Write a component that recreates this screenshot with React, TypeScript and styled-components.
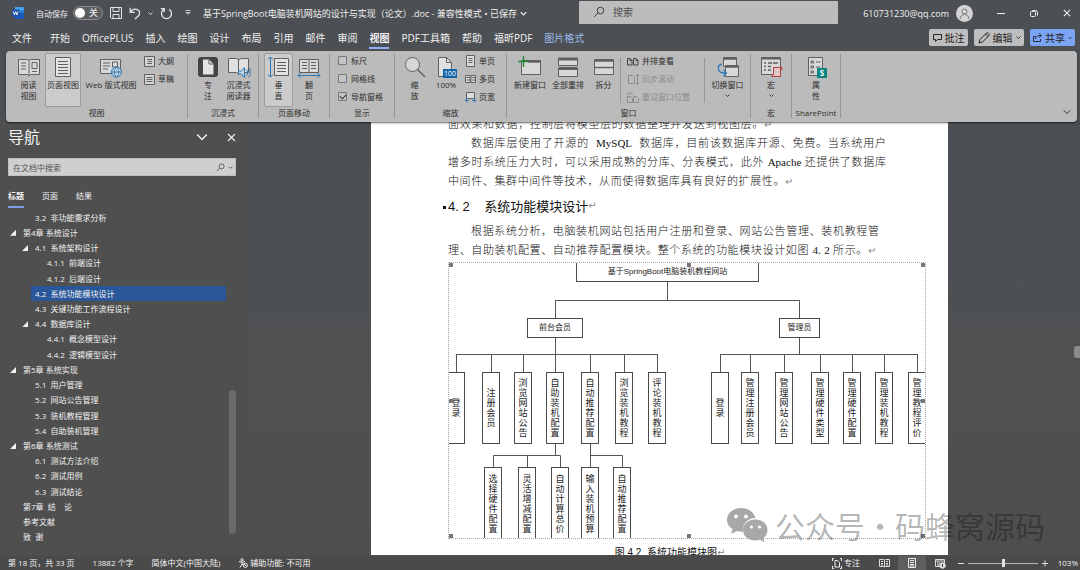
import React from "react";
import styled, { createGlobalStyle } from "styled-components";

const UI = `"Open Sans", "Noto Sans CJK SC", sans-serif`;
const SERIF = `"Liberation Serif", "Noto Sans CJK SC", serif`;
const HEI = `"Liberation Sans", "Noto Sans CJK SC", sans-serif`;

const GlobalStyle = createGlobalStyle`
  * { box-sizing: border-box; }
  body { margin: 0; overflow: hidden; font-family: ${UI}; }
  button, input { font-family: inherit; font-size: inherit; color: inherit; margin: 0; }
  button { background: none; border: 0; padding: 0; }
  svg { display: block; flex: none; }
`;

const Shell = styled.div`
  position: relative;
  display: flex;
  flex-direction: column;
  height: 100vh;
  min-height: 480px;
  background: #4c4f53;
  color: #f2f2f2;
  overflow: hidden;
`;

/* ---------- title bar ---------- */
const TitleBar = styled.header`
  display: flex;
  align-items: center;
  height: 26px;
  flex: none;
  font-size: 9px;
`;
const TitleLeft = styled.div`
  display: flex;
  align-items: center;
  flex: 1;
  min-width: 0;
  height: 24px;
  padding-left: 12px;
  white-space: nowrap;
`;
const AutoSave = styled.label`
  display: flex;
  align-items: center;
  gap: 5px;
  margin-left: 12px;
  font-size: 8px;
`;
const Toggle = styled.button`
  display: flex;
  align-items: center;
  justify-content: space-between;
  width: 30px;
  height: 14px;
  padding: 0 4px 0 1px;
  border: 1px solid #8c8c8c;
  border-radius: 7px;
  background: #5d5d5d;
  font-size: 9px;
  line-height: 12px;
`;
const Knob = styled.span`
  width: 10px;
  height: 10px;
  border-radius: 50%;
  background: #fff;
`;
const QuickTools = styled.div`
  display: flex;
  align-items: center;
  gap: 7px;
  margin-left: 7px;
  width: 93px;
`;
const IconButton = styled.button`
  display: flex;
  align-items: center;
  justify-content: center;
`;
const DocTitle = styled.div`
  display: flex;
  align-items: center;
  gap: 3px;
  overflow: hidden;
`;
const SearchBox = styled.label`
  display: flex;
  align-items: center;
  gap: 8px;
  flex: 0 1 259px;
  height: 23px;
  padding-left: 14px;
  background: #bcbcbc;
  border-radius: 1px;
  color: #444;
  margin-bottom: 2px;
  input {
    border: 0;
    background: none;
    outline: 0;
    padding: 0;
    min-width: 0;
    flex: 1;
    font-size: 10px;
  }
  input::placeholder { color: #4c4c4c; opacity: 1; }
`;
const TitleRight = styled.div`
  display: flex;
  align-items: center;
  justify-content: flex-end;
  width: 242px;
  height: 24px;
  padding-right: 9px;
`;
const Avatar = styled.span`
  display: flex;
  width: 17px;
  height: 17px;
  margin: 0 24px 0 7px;
  border-radius: 50%;
  background: #d4d4d4;
  align-items: center;
  justify-content: center;
`;
const WindowButtons = styled.div`
  display: flex;
  gap: 25px;
`;

/* ---------- tabs ---------- */
const TabBar = styled.nav`
  display: flex;
  align-items: center;
  gap: 12px;
  height: 25px;
  flex: none;
  padding: 0 5px 0 12px;
  font-size: 10px;
`;
const Tab = styled.button<{ $active?: boolean; $accent?: boolean }>`
  height: 22px;
  line-height: 18px;
  margin-bottom: 2px;
  padding-top: 2px;
  white-space: nowrap;
  color: ${(p) => (p.$accent ? "#9db9ee" : "#f2f2f2")};
  font-weight: ${(p) => (p.$active ? 700 : 400)};
  border-bottom: 2px solid ${(p) => (p.$active ? "#8fb0f0" : "transparent")};
  &:first-child { margin-right: 6px; }
`;
const TabActions = styled.div`
  display: flex;
  gap: 6px;
  margin-left: auto;
`;
const ActionButton = styled.button<{ $primary?: boolean; $width: number }>`
  display: flex;
  align-items: center;
  justify-content: center;
  gap: 3px;
  width: ${(p) => p.$width}px;
  height: 17px;
  margin-bottom: 2px;
  border-radius: 2px;
  background: ${(p) => (p.$primary ? "#7ba4f2" : "#bebebe")};
  color: #222;
  white-space: nowrap;
`;

/* ---------- ribbon ---------- */
const Ribbon = styled.section`
  display: flex;
  flex: none;
  height: 71px;
  margin: 0 3px 0 6px;
  padding-top: 3px;
  border-radius: 4px;
  background: #bbbbbb;
  box-shadow: 0 1px 2px rgba(0, 0, 0, 0.6);
  color: #2c2c2c;
  font-size: 8px;
  position: relative;
`;
const Group = styled.div<{ $width: number }>`
  display: flex;
  flex-direction: column;
  width: ${(p) => p.$width}px;
  flex: none;
  height: 64px;
  border-right: 1px solid #979797;
`;
const GroupItems = styled.div<{ $pad?: number }>`
  display: flex;
  height: 53px;
  padding-left: ${(p) => p.$pad ?? 0}px;
`;
const GroupLabel = styled.div`
  line-height: 11px;
  text-align: center;
  white-space: nowrap;
`;
const BigButton = styled.button<{ $width: number; $selected?: boolean }>`
  display: flex;
  flex-direction: column;
  align-items: center;
  flex: none;
  width: ${(p) => p.$width}px;
  height: 54px;
  margin-top: -1px;
  padding-top: 2px;
  border: 1px solid ${(p) => (p.$selected ? "#9c9c9c" : "transparent")};
  border-radius: 2px;
  background: ${(p) => (p.$selected ? "#cbcbcb" : "none")};
  white-space: pre;
  line-height: 11px;
  > svg:first-child { margin-bottom: 1px; }
  > svg + svg { margin-top: 3px; }
`;
const SmallStack = styled.div<{ $gap?: number }>`
  display: flex;
  flex-direction: column;
  padding-left: ${(p) => p.$gap ?? 4}px;
`;
const SmallButton = styled.button<{ $disabled?: boolean }>`
  display: flex;
  align-items: center;
  gap: 3px;
  height: 18px;
  line-height: 14px;
  padding-bottom: 4px;
  white-space: nowrap;
  color: ${(p) => (p.$disabled ? "#8b8b8b" : "#2c2c2c")};
`;
const CheckRow = styled.label`
  display: flex;
  align-items: center;
  gap: 4px;
  height: 18px;
  padding-bottom: 4px;
  white-space: nowrap;
`;
const CheckBox = styled.input`
  appearance: none;
  display: flex;
  align-items: center;
  justify-content: center;
  width: 9px;
  height: 9px;
  border: 1px solid #777;
  border-radius: 1px;
  background: #c4c4c4;
  &:checked::after {
    content: "";
    width: 5px;
    height: 3px;
    border-left: 1px solid #333;
    border-bottom: 1px solid #333;
    transform: rotate(-45deg);
  }
`;
const InnerRule = styled.div<{ $push?: boolean }>`
  width: 1px;
  height: 45px;
  margin: 4px 0 0 ${(p) => (p.$push ? "auto" : "0")};
  background: #979797;
`;
const CollapseButton = styled.button`
  align-self: flex-end;
  margin: 0 6px 6px auto;
`;

/* ---------- body ---------- */
const Body = styled.div`
  display: flex;
  flex: 1;
  min-height: 0;
`;
const NavPane = styled.aside`
  display: flex;
  flex-direction: column;
  width: 246px;
  flex: none;
  padding-left: 8px;
  background: #4f4f4f;
  font-size: 8px;
`;
const NavHead = styled.div`
  display: flex;
  align-items: center;
  gap: 19px;
  height: 32px;
  padding: 0 10px 2px 0;
  h2 { margin: 0 auto 0 0; font-size: 16px; font-weight: 400; line-height: 24px; }
`;
const NavSearch = styled.label`
  display: flex;
  align-items: center;
  gap: 3px;
  height: 18px;
  margin: 4px 10px 0 0;
  padding: 0 2px 0 4px;
  border: 1px solid #bdbdbd;
  background: #cfcfcf;
  color: #555;
  input { flex: 1; min-width: 0; border: 0; padding: 0; background: none; outline: 0; }
  input::placeholder { color: #555; opacity: 1; }
`;
const NavTabs = styled.div`
  display: flex;
  gap: 18px;
  height: 34px;
  padding-top: 11px;
`;
const NavTab = styled.button<{ $active?: boolean }>`
  height: 21px;
  padding-bottom: 3px;
  font-weight: ${(p) => (p.$active ? 700 : 400)};
  border-bottom: 2px solid ${(p) => (p.$active ? "#7d9fe0" : "transparent")};
`;
const TreeArea = styled.div`
  display: flex;
  flex: 1;
  min-height: 0;
  padding: 0 10px 11px 0;
`;
const Tree = styled.ul`
  display: grid;
  grid-auto-rows: 1fr;
  flex: 1;
  margin: 0;
  padding: 0 3px 0 0;
  list-style: none;
`;
const TreeRow = styled.li<{ $level: number }>`
  display: flex;
  align-items: center;
  min-height: 0;
  padding-left: ${(p) => p.$level * 12 + 2}px;
`;
const Arrow = styled.span<{ $open?: boolean }>`
  width: 6px;
  height: 6px;
  margin-right: 3px;
  flex: none;
  background: ${(p) => (p.$open ? "#f2f2f2" : "none")};
  clip-path: polygon(100% 0, 100% 100%, 0 100%);
`;
const TreeLink = styled.a<{ $current?: boolean }>`
  display: flex;
  align-items: center;
  flex: 1;
  height: 100%;
  padding-left: 4px;
  color: inherit;
  text-decoration: none;
  white-space: pre;
  line-height: 12px;
  background: ${(p) => (p.$current ? "#2a579a" : "none")};
`;
const TreeThumb = styled.div`
  width: 7px;
  margin: 180px 0 11px;
  border-radius: 3px;
  background: #6a6a6a;
`;
const Workspace = styled.main`
  display: flex;
  flex: 1;
  min-width: 0;
  background: linear-gradient(#4a4f54, #4c5054 35%, #505050 60%, #4f4e4e);
`;
const ScrollTrack = styled.div`
  width: 7px;
  padding: 224px 0 0 1px;
  flex: none;
`;
const ScrollThumb = styled.div`
  height: 12px;
  border-radius: 3px 0 0 3px;
  background: #8b8b8b;
`;
const Sheet = styled.article`
  width: 577px;
  max-width: 100%;
  margin: 0 auto 1px;
  padding: 0 22px 0 77px;
  overflow: hidden;
  background: #fff;
  color: #111;
  font-family: ${SERIF};
  font-size: 11px;
`;
const Scrolled = styled.div`
  margin-top: -7px;
`;
const Paragraph = styled.p`
  margin: 0 40px 0 0;
  line-height: 19px;
  font-weight: 300;
`;
const Line = styled.span<{ $indent?: boolean; $short?: number }>`
  display: block;
  margin-left: ${(p) => (p.$indent ? 23 : 0)}px;
  margin-right: ${(p) => p.$short ?? 0}px;
  text-align: justify;
  text-align-last: justify;
  white-space: nowrap;
`;
const Mark = styled.span`
  color: #8a8a8a;
  font-family: "DejaVu Sans", sans-serif;
  font-size: 10px;
  line-height: 10px;
`;
const Heading = styled.h3`
  display: flex;
  align-items: center;
  height: 31px;
  margin: 0 0 0 -5px;
  padding-bottom: 2px;
  font: 400 13px ${HEI};
  white-space: pre;
  &::before { content: ""; width: 3px; height: 3px; margin: 3px 2px 0 0; background: #111; }
`;
const Figure = styled.figure`
  margin: 2px 0 0;
`;
const Canvas = styled.div`
  position: relative;
  height: 277px;
  overflow: hidden;
  border: 1px dotted #a8a8a8;
  color: #222;
  font-family: ${HEI};
  font-size: 8px;
  > svg { position: absolute; left: -1px; top: -1px; }
`;
const Node = styled.div<{ $x: number; $y: number; $w: number; $h: number; $vertical?: boolean }>`
  position: absolute;
  left: ${(p) => p.$x - 449}px;
  top: ${(p) => p.$y - 263}px;
  width: ${(p) => p.$w}px;
  height: ${(p) => p.$h}px;
  display: flex;
  align-items: center;
  justify-content: center;
  border: 1px solid #4a4a4a;
  text-align: center;
  line-height: 10px;
  font-size: ${(p) => (p.$vertical ? 9 : 8)}px;
  white-space: ${(p) => (p.$vertical ? "pre" : "nowrap")};
`;
const Handle = styled.i<{ $x: number; $y: number }>`
  position: absolute;
  left: ${(p) => p.$x}px;
  top: ${(p) => p.$y}px;
  width: 4px;
  height: 4px;
  background: #777;
`;
const Caption = styled.figcaption`
  margin: 4px 40px 0 0;
  padding-left: 6px;
  line-height: 19px;
  text-align: center;
  font-family: ${HEI};
  font-size: 10px;
  white-space: pre;
`;
const Watermark = styled.div`
  position: absolute;
  right: 35px;
  bottom: 23px;
  display: flex;
  align-items: center;
  gap: 7px;
  color: rgba(0, 0, 0, 0.3);
  font: 400 30px/44px "Noto Sans CJK SC", sans-serif;
  pointer-events: none;
`;

/* ---------- status bar ---------- */
const StatusBar = styled.footer`
  display: flex;
  align-items: center;
  height: 14px;
  flex: none;
  padding: 0 2px 0 8px;
  background: #4b4a4a;
  font-size: 8px;
  line-height: 12px;
  white-space: nowrap;
`;
const StatusLeft = styled.div`
  display: flex;
  align-items: center;
  gap: 18px;
  flex: 1;
`;
const StatusItem = styled.span`
  display: flex;
  align-items: center;
  gap: 2px;
`;
const ViewButtons = styled.div`
  display: flex;
  margin-left: 10px;
`;
const ViewButton = styled.button<{ $active?: boolean }>`
  display: flex;
  align-items: center;
  justify-content: center;
  width: 28px;
  height: 14px;
  background: ${(p) => (p.$active ? "#5e5e5e" : "none")};
`;
const Zoom = styled.div`
  display: flex;
  align-items: center;
  gap: 4px;
  margin-left: 4px;
`;
const Slider = styled.input`
  appearance: none;
  width: 70px;
  height: 10px;
  background: linear-gradient(#b5b5b5, #b5b5b5) center / 100% 1px no-repeat;
  &::-webkit-slider-thumb {
    appearance: none;
    width: 3px;
    height: 8px;
    background: #e0e0e0;
  }
`;
const Percent = styled.span`
  width: 26px;
  text-align: right;
`;

/* ---------- icons ---------- */
type IconProps = { w?: number; h?: number; box?: string; children: React.ReactNode; color?: string; sw?: number };
const Icon = ({ w = 22, h = 22, box, children, color = "#606060", sw = 1 }: IconProps) => (
  <svg width={w} height={h} viewBox={box ?? `0 0 ${w} ${h}`} fill="none" stroke={color} strokeWidth={sw}>
    {children}
  </svg>
);
const Chevron = ({ w = 5, color = "currentColor" }: { w?: number; color?: string }) => (
  <svg width={w} height={w} viewBox="0 0 10 10" fill="none" stroke={color} strokeWidth={w > 7 ? 1.2 : 1.8}>
    <path d="M1 3l4 4 4-4" />
  </svg>
);
const Lens = ({ size = 12 }: { size?: number }) => (
  <Icon w={size} h={size} box="0 0 12 12" color="#444">
    <circle cx="7.5" cy="4.5" r="3.3" />
    <path d="M5 7L1 11" />
  </Icon>
);
const Cross = ({ size = 9 }: { size?: number }) => (
  <Icon w={size} h={size} box="0 0 9 9" color="#eee" sw={1.2}>
    <path d="M1 1l7 7M8 1l-7 7" />
  </Icon>
);
const WordLogo = () => (
  <svg width="12" height="12" viewBox="0 0 12 12">
    <path d="M3 0h8l1 1v3H3z" fill="#41a5ee" />
    <path d="M3 3.5h9v3H3z" fill="#2b7cd3" />
    <path d="M3 6.2h9v5l-1 .8H3z" fill="#185abd" />
    <rect y="2.5" width="7.4" height="7.2" rx=".6" fill="#174ea6" />
    <path d="M1.4 4.4l1 3.6 1.3-3.4L5 8l1-3.6" fill="none" stroke="#fff" strokeWidth=".9" />
  </svg>
);
const Save = () => (
  <Icon w={12} h={12} color="#e6e6e6">
    <path d="M.5.5h11v11h-10l-1-1zM3 .5v4h6v-4M3 11.5v-4h6v4" />
  </Icon>
);
const Undo = () => (
  <Icon w={12} h={13} color="#e6e6e6" sw={1.3}>
    <path d="M1.2.8v4.6h4.6M1.4 5.2C3 2.6 6 1.4 8.4 2.6c2.8 1.4 2.8 4.6.8 6.5L6 12" />
  </Icon>
);
const Redo = () => (
  <Icon w={13} h={13} color="#e6e6e6" sw={1.3}>
    <path d="M3.8 2.4A5 5 0 1 0 9.2 2.4M.8 1.6h3.4v3.4" />
  </Icon>
);
const ReadView = () => (
  <Icon>
    <path d="M.5 3.5h9l1.500 1 1.500-1h9v15h-9l-1.500 1.500-1.500-1.500h-9z" fill="#d8d8d8" />
    <path d="M11 4.500v15M3 7h5M3 10h5M3 13h5M14 6.500h5v6h-5zM14 15.500h5" />
  </Icon>
);
const PrintView = () => (
  <Icon>
    <path d="M3.500 1.500h15v19h-15z" fill="#e2e2e2" />
    <path d="M6 5.500h10M6 8.500h10M6 11.500h10M6 14.500h10M6 17.500h10" />
  </Icon>
);
const WebView = () => (
  <Icon w={24} h={22}>
    <path d="M1.500 3.500h20v14h-20z" fill="#d8d8d8" />
    <path d="M4 7h7M4 10h7M4 13h5M13.500 6h5v5h-5z" />
    <g stroke="#2a78b8"><circle cx="17.500" cy="16" r="5" fill="#c7d5df" /><path d="M12.500 16h10M17.500 11c-3 3-3 7 0 10M17.500 11c3 3 3 7 0 10" /></g>
  </Icon>
);
const Outline = () => (
  <Icon w={11} h={11}>
    <path d="M.5.5h10v10H.5z" fill="#d4d4d4" />
    <path d="M3 3.500h5M4 5.500h4M3 7.500h5" />
  </Icon>
);
const Draft = () => (
  <Icon w={11} h={11}>
    <path d="M.5.5h10v10H.5z" fill="#d4d4d4" />
    <path d="M2.500 3.500h6M2.500 5.500h6M2.500 7.500h6" />
  </Icon>
);
const Focus = () => (
  <Icon>
    <rect x="1" y="1" width="20" height="20" rx="3" fill="#444" stroke="none" />
    <path d="M6 3.500h6l4.500 4.500v10.500H6z" fill="#e4e4e4" stroke="none" />
    <path d="M12 3.500V8h4.500" />
  </Icon>
);
const Immersive = () => (
  <Icon w={24}>
    <path d="M1.500 2.500h8l2.500 1 2.500-1h7v14h-7l-2.500 1.500-2.500-1.500h-8z" fill="#e0e0e0" />
    <path d="M11.500 3.500V18" />
    <path d="M11.500 15h3l3-3.500v10l-3-3.500h-3z" fill="#c7d5df" stroke="#2a78b8" />
    <path d="M19.500 13.500c1.500 2 1.500 4 0 6M21.500 11.500c2.300 3 2.300 7 0 10" stroke="#2a78b8" />
  </Icon>
);
const Vertical = () => (
  <Icon w={24}>
    <path d="M7.500 2.500h14v17h-14z" fill="#e2e2e2" />
    <path d="M10 6.500h9M10 9.500h9M10 12.500h9M10 15.500h9" />
    <path d="M3.500 1v20M1 3.500L3.500 1 6 3.500M1 18.500L3.500 21 6 18.500" stroke="#2a78b8" />
  </Icon>
);
const FlipPage = () => (
  <Icon w={24}>
    <path d="M2.500 3.500h19v13h-19zM12 3.500v13" fill="#dadada" />
    <path d="M5 6.500h5M5 9.500h5M5 12.500h5M14 6.500h5M14 9.500h5M14 12.500h5" />
    <path d="M1 19.500h22M3.500 17L1 19.500 3.500 22M20.500 17l2.500 2.500-2.500 2.500" stroke="#2a78b8" />
  </Icon>
);
const Magnifier = () => (
  <Icon>
    <circle cx="8.500" cy="8.500" r="7" fill="#d6d6d6" />
    <path d="M13.500 13.500l7.500 7.500" strokeWidth="1.400" />
  </Icon>
);
const Hundred = () => (
  <Icon>
    <path d="M3.500 1.500h8l5 5v14h-13z" fill="#e0e0e0" />
    <path d="M11.500 1.500v5h5" />
    <rect x="8" y="13" width="14" height="9" fill="#1464a8" stroke="none" />
    <text x="15" y="20" textAnchor="middle" fill="#fff" stroke="none" fontSize="7" fontFamily="Open Sans">100</text>
  </Icon>
);
const OnePage = () => (
  <Icon w={11} h={12}><path d="M1.500.5h8v11h-8z" fill="#ddd" /><path d="M3.500 3.500h4M3.500 5.500h4M3.500 7.500h4" /></Icon>
);
const MultiPage = () => (
  <Icon w={11} h={12}><path d="M.5 2.500h4.500v7H.5zM6 2.500h4.500v7H6z" fill="#ddd" /><path d="M1.500 4.500h3M1.500 7h3M7 4.500h3M7 7h3" /></Icon>
);
const PageWidth = () => (
  <Icon w={11} h={12}>
    <path d="M1.500 1.500h8v6h-8z" fill="#ddd" />
    <path d="M0 9.500h4M7 9.500h4M2 7.500l-1.500 2 1.500 2M9 7.500l1.500 2-1.500 2" stroke="#2a78b8" />
  </Icon>
);
const NewWindow = () => (
  <Icon w={24}>
    <path d="M3.500 4.500h19v14h-19z" fill="#d8d8d8" /><path d="M10 5.500h12" strokeWidth="2.500" />
    <path d="M0 5.500h11M5.500 0v11" stroke="#1d8a34" strokeWidth="1.400" />
  </Icon>
);
const ArrangeAll = () => (
  <Icon>
    <path d="M1.500 2.500h19v7h-19zM1.500 12.500h19v8h-19z" fill="#d8d8d8" /><path d="M1.500 3h19M1.500 12.500h19" strokeWidth="3" />
  </Icon>
);
const Split = () => (
  <Icon><path d="M1.500 3.500h19v15h-19z" fill="#d8d8d8" /><path d="M1.500 4.500h19" strokeWidth="2.500" /><path d="M1.500 11.500h19" strokeWidth="1.500" /></Icon>
);
const SideBySide = () => (
  <Icon w={12} h={11} color="#444">
    <path d="M.5 2.500h2.500l2 2v4.500H.5zM6.500 2.500H9l2 2v4.500H6.500zM3 2.500v2h2M9 2.500v2h2" />
  </Icon>
);
const SyncScroll = () => (
  <Icon w={12} h={11} color="#8b8b8b"><path d="M1.500 1.500h4l2 2v6h-6zM10.500.5v10M9 2l1.500-1.500L12 2M9 9l1.500 1.500L12 9" /></Icon>
);
const ResetPos = () => (
  <Icon w={12} h={11} color="#8b8b8b"><path d="M.5 4.500h3l2 2v4h-5zM6.500 4.500h3l2 2v4h-5zM1 3V.5M1 1.500c2-1 4-1 5 1" /></Icon>
);
const SwitchWin = () => (
  <Icon w={24}>
    <path d="M7.500 1.500h13v9h-13zM9.500 9.500h13v11h-13z" fill="#d8d8d8" /><path d="M7.500 2.500h13M9.500 10.500h13" strokeWidth="2.500" />
    <path d="M6 8c-5 1-5 8 1 9h3M7.500 14l3 3-3 3.500" stroke="#2a78b8" strokeWidth="1.300" />
  </Icon>
);
const Macro = () => (
  <Icon w={24}>
    <path d="M2.500 1.500h19v17h-19z" fill="#d8d8d8" /><path d="M2.500 2.500h19" strokeWidth="2" />
    <path d="M5 7h2M9 7h4M14 7h5M5 10.500h2M9 10.500h3M5 14h2M9 14h3" strokeWidth="1.300" />
    <path d="M14.500 11.500h7v9h-8.500v-2h1.500zM21.500 13.500h1.500v-2h-2" fill="#dcc8c8" stroke="#b43c3c" />
  </Icon>
);
const Properties = () => (
  <Icon>
    <path d="M3.500 1.500h14v18h-14z" fill="#d8d8d8" />
    <path d="M6 5h2.500v2H6zM6 10h2.500v2H6zM6 15h2.500v2H6zM11 6h4.500M11 11h4.500" />
    <rect x="12" y="12" width="10" height="10" fill="#0b8484" stroke="none" />
    <text x="17" y="20" textAnchor="middle" fill="#fff" stroke="none" fontSize="8" fontWeight="700" fontFamily="Open Sans">S</text>
  </Icon>
);
const Bubble = () => (
  <Icon w={9} h={9} color="#222"><path d="M.5 1.500h8v5H4.500l-2 2v-2h-2z" /></Icon>
);
const Pencil = () => (
  <Icon w={12} h={12} color="#222"><path d="M1 11l1-3.500L8.500 1c1-1 3.500 1 2.500 2.500L4.500 10zM7.500 2l2.500 2.500" /></Icon>
);
const Share = () => (
  <Icon w={9} h={9} color="#234"><path d="M3 3.500H.5v5h7V6M2.500 6c.5-2.500 2-3.500 5.500-3.500M6 .5l2.500 2L6 4.500" /></Icon>
);
const FocusSmall = () => (
  <Icon w={10} h={11} color="#eee"><path d="M.5 3V.5H2M8 .5h1.500V3M.5 8v2.500H2M8 10.500h1.500V8M3 2.500h2.500l2 2v4.500H3z" /></Icon>
);
const BookSmall = () => (
  <Icon w={11} h={10} color="#ddd"><path d="M.5 1.500h4l1 .5 1-.5h4v7h-4l-1 .5-1-.5h-4zM5.500 2v7M2 3.500h2M2 5.500h2M7 3.500h2M7 5.500h2M2 7h2M7 7h2" /></Icon>
);
const PageSmall = () => (
  <Icon w={10} h={10} color="#eee"><path d="M1.500.5h7v9h-7zM3 2.500h4M3 4.500h4M3 6.500h4M3 8h4" /></Icon>
);
const WebSmall = () => (
  <Icon w={11} h={11} color="#ddd">
    <path d="M.5 1.500h9v7h-9zM.5 3h9M2 5h3M2 7h2" /><circle cx="7.500" cy="7.500" r="2.800" fill="#ddd" /><path d="M7.500 6v3" stroke="#444" />
  </Icon>
);
const Accessibility = () => (
  <Icon w={10} h={10} color="#eee">
    <circle cx="4" cy="1.800" r="1.200" /><path d="M1 3.500l3 .8 3-.8M4 4.300v2L2 9.500M4 6l1.200 1" /><circle cx="7.300" cy="7.300" r="2.100" /><path d="M6 6l2.600 2.600" />
  </Icon>
);
const WeChat = () => (
  <svg width="42" height="36" viewBox="0 0 42 36">
    <path fill="#a8a8a8" d="M15 1C7 1 1 6 1 13c0 4 2 7 5.500 9L5 27l6-3c2 .6 4 .8 6 .7C16 17 22 11 29.500 11 28 5 22 1 15 1z" />
    <path fill="#a8a8a8" d="M29.500 12.500C22.500 12.500 17 17 17 23s5.500 10.500 12.500 10.500c1.500 0 3-.2 4.500-.7l4.500 2.500-1.200-4C40 29 41.500 26 41.500 23c0-6-5-10.500-12-10.500z" />
    <g fill="#fff"><circle cx="10" cy="9.500" r="1.900" /><circle cx="20" cy="9.500" r="1.900" /><circle cx="25.500" cy="20" r="1.600" /><circle cx="33.500" cy="20" r="1.600" /></g>
  </svg>
);

/* ---------- data ---------- */
const tabs = ["文件", "开始", "OfficePLUS", "插入", "绘图", "设计", "布局", "引用", "邮件", "审阅", "视图", "PDF工具箱", "帮助", "福昕PDF", "图片格式"];

const outline: { text: string; level: number; open?: boolean; current?: boolean }[] = [
  { text: "3.2  非功能需求分析", level: 1 },
  { text: "第4章 系统设计", level: 0, open: true },
  { text: "4.1  系统架构设计", level: 1, open: true },
  { text: "4.1.1  前端设计", level: 2 },
  { text: "4.1.2  后端设计", level: 2 },
  { text: "4.2  系统功能模块设计", level: 1, current: true },
  { text: "4.3  关键功能工作流程设计", level: 1 },
  { text: "4.4  数据库设计", level: 1, open: true },
  { text: "4.4.1  概念模型设计", level: 2 },
  { text: "4.4.2  逻辑模型设计", level: 2 },
  { text: "第5章 系统实现", level: 0, open: true },
  { text: "5.1  用户管理", level: 1 },
  { text: "5.2  网站公告管理", level: 1 },
  { text: "5.3  装机教程管理", level: 1 },
  { text: "5.4  自助装机管理", level: 1 },
  { text: "第6章 系统测试", level: 0, open: true },
  { text: "6.1  测试方法介绍", level: 1 },
  { text: "6.2  测试用例", level: 1 },
  { text: "6.3  测试结论", level: 1 },
  { text: "第7章  结    论", level: 0 },
  { text: "参考文献", level: 0 },
  { text: "致  谢", level: 0 },
];

const upper: [number, string][] = [
  [456, "登录"], [491, "注册会员"], [523, "浏览网站公告"], [555, "自助装机配置"], [590, "自动推荐配置"], [624, "浏览装机教程"], [657, "评论装机教程"],
  [720, "登录"], [750, "管理注册会员"], [784, "管理网站公告"], [820, "管理硬件类型"], [852, "管理硬件配置"], [884, "管理装机教程"], [917, "管理教程评价"],
];
const lower: [number, string][] = [
  [493, "选择硬件配置"], [527, "灵活增减配置"], [560, "自动计算总价"], [590, "输入装机预算"], [622, "自动推荐配置"],
];
const handles = [[0, 0], [238, 0], [472, 0], [0, 136], [472, 136], [0, 271], [238, 271], [472, 271]];
const stack = (s: string) => s.split("").join("\n");

const Diagram = () => (
  <Canvas>
    <svg width="478" height="277" viewBox="448 262 478 277" fill="none" stroke="#555">
      <path d="M667.5 281v19M555.5 318v-17.5H799.5v17.5M555.5 337v35M456.5 372v-17.5H657.5V372M799.5 337v17.5M720.5 372v-17.5H917.5V372" />
      <path d={upper.map(([x]) => `M${x + 0.5} 354v18`).join("")} />
      <path d="M555.5 443v12.5M493.5 467v-11.5H560.5V467M527.5 455v12M590.5 443v24M590.5 455.5H622.5V467" />
    </svg>
    <Node $x={576} $y={261} $w={183} $h={21}>基于SpringBoot电脑装机教程网站</Node>
    <Node $x={527} $y={318} $w={56} $h={20}>前台会员</Node>
    <Node $x={779} $y={318} $w={41} $h={20}>管理员</Node>
    {upper.map(([x, t]) => (
      <Node key={x} $x={x - 9} $y={372} $w={18} $h={72} $vertical>{stack(t)}</Node>
    ))}
    {lower.map(([x, t]) => (
      <Node key={x} $x={x - 9} $y={467} $w={18} $h={74} $vertical>{stack(t)}</Node>
    ))}
    {handles.map(([x, y]) => (
      <Handle key={`${x}-${y}`} $x={x} $y={y} />
    ))}
  </Canvas>
);

export default function App() {
  return (
    <Shell>
      <GlobalStyle />
      <TitleBar>
        <TitleLeft>
          <WordLogo />
          <AutoSave htmlFor="autosave">自动保存
            <Toggle id="autosave" role="switch" aria-checked={false}><Knob />关</Toggle>
          </AutoSave>
          <QuickTools>
            <IconButton aria-label="保存"><Save /></IconButton>
            <IconButton aria-label="撤消"><Undo /></IconButton>
            <Chevron />
            <IconButton aria-label="恢复"><Redo /></IconButton>
            <IconButton aria-label="自定义">
              <Icon w={15} h={6} color="#ccc"><path d="M5.500.5h5M6 2.500h4l-2 2z" /></Icon>
            </IconButton>
          </QuickTools>
          <DocTitle>
            <span>基于SpringBoot电脑装机网站的设计与实现（论文）.doc - 兼容性模式 • 已保存</span>
            <Chevron w={7} />
          </DocTitle>
        </TitleLeft>
        <SearchBox><Lens /><input placeholder="搜索" aria-label="搜索" /></SearchBox>
        <TitleRight>
          <span>610731230@qq.com</span>
          <Avatar>
            <Icon w={13} h={13} color="#777"><circle cx="6.500" cy="4.500" r="2.500" /><path d="M2 12c0-6 9-6 9 0" /></Icon>
          </Avatar>
          <WindowButtons>
            <IconButton aria-label="最小化"><Icon w={8} h={9} color="#eee"><path d="M0 4.500h8" /></Icon></IconButton>
            <IconButton aria-label="还原"><Icon w={8} h={9} color="#eee"><rect x=".5" y="2.500" width="5" height="5" rx="1" /><path d="M2.500 1.500h3q2 0 2 2v3" /></Icon></IconButton>
            <IconButton aria-label="关闭"><Cross size={8} /></IconButton>
          </WindowButtons>
        </TitleRight>
      </TitleBar>

      <TabBar>
        {tabs.map((t) => (
          <Tab key={t} $active={t === "视图"} $accent={t === "图片格式"}>{t}</Tab>
        ))}
        <TabActions>
          <ActionButton $width={39}><Bubble />批注</ActionButton>
          <ActionButton $width={50}><Pencil />编辑<Chevron /></ActionButton>
          <ActionButton $width={45} $primary><Share />共享<Chevron w={4} /></ActionButton>
        </TabActions>
      </TabBar>

      <Ribbon>
        <Group $width={182}>
          <GroupItems $pad={6}>
            <BigButton $width={33}><ReadView />{"阅读\n视图"}</BigButton>
            <BigButton $width={36} $selected><PrintView />页面视图</BigButton>
            <BigButton $width={60}><WebView />Web 版式视图</BigButton>
            <SmallStack $gap={3}>
              <SmallButton><Outline />大纲</SmallButton>
              <SmallButton><Draft />草稿</SmallButton>
            </SmallStack>
          </GroupItems>
          <GroupLabel>视图</GroupLabel>
        </Group>
        <Group $width={71}>
          <GroupItems $pad={3}>
            <BigButton $width={34}><Focus />{"专\n注"}</BigButton>
            <BigButton $width={27}><Immersive />{"沉浸式\n阅读器"}</BigButton>
          </GroupItems>
          <GroupLabel>沉浸式</GroupLabel>
        </Group>
        <Group $width={71}>
          <GroupItems $pad={5}>
            <BigButton $width={29} $selected><Vertical />{"垂\n直"}</BigButton>
            <BigButton $width={32}><FlipPage />{"翻\n页"}</BigButton>
          </GroupItems>
          <GroupLabel>页面移动</GroupLabel>
        </Group>
        <Group $width={65}>
          <GroupItems $pad={4}>
            <SmallStack>
              <CheckRow><CheckBox type="checkbox" />标尺</CheckRow>
              <CheckRow><CheckBox type="checkbox" />网格线</CheckRow>
              <CheckRow><CheckBox type="checkbox" defaultChecked />导航窗格</CheckRow>
            </SmallStack>
          </GroupItems>
          <GroupLabel>显示</GroupLabel>
        </Group>
        <Group $width={112}>
          <GroupItems $pad={3}>
            <BigButton $width={33}><Magnifier />{"缩\n放"}</BigButton>
            <BigButton $width={30}><Hundred />100%</BigButton>
            <SmallStack>
              <SmallButton><OnePage />单页</SmallButton>
              <SmallButton><MultiPage />多页</SmallButton>
              <SmallButton><PageWidth />页宽</SmallButton>
            </SmallStack>
          </GroupItems>
          <GroupLabel>缩放</GroupLabel>
        </Group>
        <Group $width={244}>
          <GroupItems $pad={4}>
            <BigButton $width={38}><NewWindow />新建窗口</BigButton>
            <BigButton $width={38}><ArrangeAll />全部重排</BigButton>
            <BigButton $width={33}><Split />拆分</BigButton>
            <InnerRule />
            <SmallStack $gap={6}>
              <SmallButton><SideBySide />并排查看</SmallButton>
              <SmallButton $disabled><SyncScroll />同步滚动</SmallButton>
              <SmallButton $disabled><ResetPos />重设窗口位置</SmallButton>
            </SmallStack>
            <InnerRule $push />
            <BigButton $width={45}><SwitchWin />切换窗口<Chevron /></BigButton>
          </GroupItems>
          <GroupLabel>窗口</GroupLabel>
        </Group>
        <Group $width={41}>
          <GroupItems><BigButton $width={40}><Macro />宏<Chevron /></BigButton></GroupItems>
          <GroupLabel>宏</GroupLabel>
        </Group>
        <Group $width={49}>
          <GroupItems><BigButton $width={48}><Properties />{"属\n性"}</BigButton></GroupItems>
          <GroupLabel>SharePoint</GroupLabel>
        </Group>
        <CollapseButton aria-label="折叠功能区"><Chevron w={8} /></CollapseButton>
      </Ribbon>

      <Body>
        <NavPane>
          <NavHead>
            <h2>导航</h2>
            <IconButton aria-label="选项"><Chevron w={12} /></IconButton>
            <IconButton aria-label="关闭导航"><Cross /></IconButton>
          </NavHead>
          <NavSearch>
            <input placeholder="在文档中搜索" aria-label="在文档中搜索" />
            <Lens size={9} /><Chevron />
          </NavSearch>
          <NavTabs>
            <NavTab $active>标题</NavTab>
            <NavTab>页面</NavTab>
            <NavTab>结果</NavTab>
          </NavTabs>
          <TreeArea>
            <Tree>
              {outline.map((o) => (
                <TreeRow key={o.text} $level={o.level}>
                  <Arrow $open={o.open} />
                  <TreeLink href="#" $current={o.current}>{o.text}</TreeLink>
                </TreeRow>
              ))}
            </Tree>
            <TreeThumb />
          </TreeArea>
        </NavPane>

        <Workspace>
          <Sheet>
            <Scrolled>
              <Paragraph>
                <Line $short={114}>面效果和数据，控制层将模型层的数据整理并发送到视图层。<Mark>↵</Mark></Line>
              </Paragraph>
              <Paragraph>
                <Line $indent>数据库层使用了开源的&nbsp; MySQL&nbsp; 数据库，目前该数据库开源、免费。当系统用户</Line>
                <Line>增多时系统压力大时，可以采用成熟的分库、分表模式，此外 Apache 还提供了数据库</Line>
                <Line $short={93}>中间件、集群中间件等技术，从而使得数据库具有良好的扩展性。<Mark>↵</Mark></Line>
              </Paragraph>
              <Heading>4. 2    系统功能模块设计<Mark>↵</Mark></Heading>
              <Paragraph>
                <Line $indent $short={7}>根据系统分析，电脑装机网站包括用户注册和登录、网站公告管理、装机教程管</Line>
                <Line $short={10}>理、自助装机配置、自动推荐配置模块。整个系统的功能模块设计如图 4. 2 所示。<Mark>↵</Mark></Line>
              </Paragraph>
              <Figure>
                <Diagram />
                <Caption>图 4.2  系统功能模块图<Mark>↵</Mark></Caption>
              </Figure>
            </Scrolled>
          </Sheet>
          <ScrollTrack><ScrollThumb /></ScrollTrack>
        </Workspace>
      </Body>

      <StatusBar>
        <StatusLeft>
          <span>第 18 页，共 33 页</span>
          <span>13882 个字</span>
          <span>简体中文(中国大陆)</span>
          <StatusItem><Accessibility />辅助功能: 不可用</StatusItem>
        </StatusLeft>
        <StatusItem><FocusSmall />专注</StatusItem>
        <ViewButtons>
          <ViewButton aria-label="阅读视图"><BookSmall /></ViewButton>
          <ViewButton aria-label="页面视图" $active><PageSmall /></ViewButton>
          <ViewButton aria-label="Web 版式视图"><WebSmall /></ViewButton>
        </ViewButtons>
        <Zoom>
          <IconButton aria-label="缩小"><Icon w={6} h={7} color="#ddd"><path d="M0 3.500h6" /></Icon></IconButton>
          <Slider type="range" aria-label="缩放比例" min={0} max={200} defaultValue={101} />
          <IconButton aria-label="放大"><Icon w={6} h={7} color="#ddd"><path d="M0 3.500h6M3 .5v6" /></Icon></IconButton>
          <Percent>103%</Percent>
        </Zoom>
      </StatusBar>

      <Watermark><WeChat /><span>公众号·码蜂窝源码</span></Watermark>
    </Shell>
  );
}
